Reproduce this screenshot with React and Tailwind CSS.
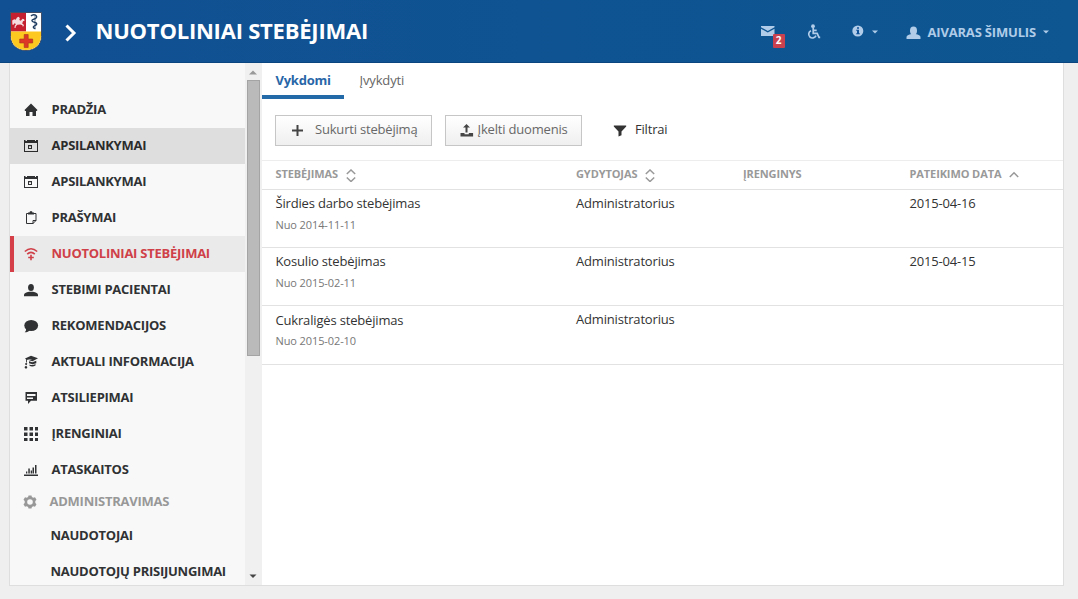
import React from "react";

const Svg = ({ w = 16, h = 16, className = "", children }) => (
  <svg width={w} height={h} viewBox={`0 0 ${w} ${h}`} fill="currentColor" className={`block shrink-0 ${className}`}>
    {children}
  </svg>
);

const CalendarIcon = () => (
  <Svg>
    <path d="M1 2h1.500v1h1.500V2h8v1h1V2h2v12H1zM2 5v8h12V5z" fillRule="evenodd" />
    <path d="M5 7h4v4H5zM6 8.200v1.700h2V8.200z" fillRule="evenodd" />
  </Svg>
);

const icons = {
  home: (
    <Svg>
      <path d="M8 1.500 14.500 8l-.8.900H13V14H9.500v-4h-3v4H3V8.900h-.9L1.500 8z" />
    </Svg>
  ),
  calendar: <CalendarIcon />,
  clipboard: (
    <Svg>
      <path d="M5.500 3.500h-2v10h6.500l3-3v-7h-2M10 14v-3.500h3" fill="none" stroke="currentColor" strokeWidth="1" />
      <path d="M5 2.500h1.500a1.500 1.500 0 0 1 3 0H11v2H5z" />
    </Svg>
  ),
  wifi: (
    <Svg>
      <g fill="none" stroke="currentColor" strokeWidth="1.600">
        <path d="M1.800 5.500Q8 0 14.200 5.500M4.200 8.200Q8 4.600 11.800 8.200" />
        <path d="M8 8.800v5.500M5.200 11.500h5.600" />
      </g>
    </Svg>
  ),
  user: (
    <Svg>
      <ellipse cx="8" cy="5.500" rx="2.900" ry="3.500" />
      <path d="M1 14.300v-1.800c0-1 2-2.200 5-2.700h4c3 .5 5 1.700 5 2.700v1.800z" />
    </Svg>
  ),
  comment: (
    <Svg>
      <ellipse cx="8.200" cy="7.500" rx="6.900" ry="5.600" />
      <path d="M3 10.500c.3 1.800-.3 2.800-1.300 3.800 2.500 0 4.300-.8 5-2.300z" />
    </Svg>
  ),
  cap: (
    <Svg>
      <path d="M2 4.500 8 1.800l7 2.400-5.500 3-3.500-1 3.500-1.200-5 .8-.5.300v2.500h-.9V5.500z" />
      <path d="M6 7.200 9.300 8.200l4-1.500v2.500L9.500 10.200 6 9.200zM6.500 10.500c2 .9 4.300.7 6-.4v1.300c-2 1.400-4.500 1.300-6 .3zM3.200 9a1 1 0 1 1-.1 0zM3 12a1.300 1.300 0 1 1-.1 0z" />
    </Svg>
  ),
  feedback: (
    <Svg>
      <path d="M2.500 2H14v8.700H8L5 14v-3.300H2.500zM4 4v2h8.500V4zM4 7.500V9h6V7.500z" fillRule="evenodd" />
    </Svg>
  ),
  grid: (
    <Svg>
      <path d="M1 1h3.500v3.500H1zM6.500 1H10v3.500H6.500zM12 1h3v3.500h-3zM1 6.500h3.500V10H1zM6.500 6.500H10V10H6.500zM12 6.500h3V10h-3zM1 12h3.500v3H1zM6.500 12H10v3H6.500zM12 12h3v3h-3z" />
    </Svg>
  ),
  chart: (
    <Svg>
      <path d="M1 12.500h14V14H1zM3 9.500h1.300v2H3zM5.300 6.500h1.500v5H5.300zM7.700 8.500H9v3H7.700zM9.500 5.500H11v6H9.500zM12 3h1.500v8.500H12z" />
    </Svg>
  ),
};

const menu = [
  ["home", "PRADŽIA"],
  ["calendar", "APSILANKYMAI", "hover"],
  ["calendar", "APSILANKYMAI"],
  ["clipboard", "PRAŠYMAI"],
  ["wifi", "NUOTOLINIAI STEBĖJIMAI", "active"],
  ["user", "STEBIMI PACIENTAI"],
  ["comment", "REKOMENDACIJOS"],
  ["cap", "AKTUALI INFORMACIJA"],
  ["feedback", "ATSILIEPIMAI"],
  ["grid", "ĮRENGINIAI"],
  ["chart", "ATASKAITOS"],
];

const itemStyles = {
  hover: "border-[#dedede] bg-[#dedede] text-[#2b2b2b]",
  active: "border-[#d43f48] bg-[#eaeaea] text-[#cf4048]",
  normal: "border-[#f8f8f8] text-[#303234]",
};

function Crest() {
  return (
    <svg width="34" height="41" viewBox="0 0 34 41" className="block shrink-0">
      <path d="M1.500 1.500h31v24c0 8-6.500 14-15.500 14s-15.500-6-15.500-14z" fill="#fff" stroke="#39455c" strokeWidth=".9" />
      <path d="M2 2h15v18.500H2z" fill="#c4202f" />
      <path d="M2 20.500h30V25c0 8.500-6.500 14-15 14S2 33.500 2 25z" fill="#fdc921" />
      <path d="M15.200 23.500h4v4.500h4.500v4h-4.500v4.500h-4V32h-4.500v-4h4.500z" fill="#dd3526" stroke="#a1351d" strokeWidth=".6" />
      <path d="m3.200 9.500 2-1.300 1.500.6L8 6.500l1.800-.8 1 1.500-.5 1.800 1.500.8 1.700-2 1.600.5.500 1.400-1.600.5-.8 2.300 1.800 1.500-.7 1.500-1-.2.3-1-2.300-.8-3 .2-1.500 1.500-.3 1.800-1-.1.200-2.200 1.300-1.600-1.500-.8-1.300 1.700-.8-.5z" fill="#fff" opacity=".85" />
      <path d="M26 3.500v15" stroke="#4f6580" strokeWidth=".8" />
      <path d="M22 5c2-2.500 6.500-1 5.500 1.400s-4.800 1.300-4.600 3.300 5 1.200 4.900 3.200-3.500 1.400-3.500 3.100 2 1.300 2 1.300" fill="none" stroke="#1e3b60" strokeWidth="1.400" />
    </svg>
  );
}

const Caret = () => (
  <Svg w={6} h={4}>
    <path d="M0 .5h6L3 3.500z" />
  </Svg>
);

function Header() {
  return (
    <header className="flex h-[63px] items-center border-b border-[#0b457f] bg-[#0f5292] bg-linear-to-r from-[#115093] to-[#0d5691] pl-[9px] text-[#b0cce8]">
      <Crest />
      <Svg w={14} h={18} className="ml-[22px] mt-[3px] text-white">
        <path d="m1.500 1.500 7.500 7.500-7.500 7.500" fill="none" stroke="currentColor" strokeWidth="3" />
      </Svg>
      <h1 className="ml-[16.500px] w-[640px] pb-[3px] text-[22px] leading-[30px] font-bold tracking-[-0.22px] text-white">NUOTOLINIAI STEBĖJIMAI</h1>
      <div className="flex items-center pt-[2px]">
        <div className="relative ml-[25px] -mt-[2px]">
          <Svg w={14} h={11}>
            <path d="M0 0h13.500v1.300L6.800 5 0 1.300zM0 2.700l6.800 3.800 6.700-3.800V10H0z" />
          </Svg>
          <span className="absolute top-[8px] left-[12px] flex h-[14px] w-[12px] items-center justify-center rounded-[1px] bg-[#c9414f] text-[10px] font-bold text-white">2</span>
        </div>
        <Svg w={14} h={16} className="ml-[32px] -mt-px">
          <circle cx="6" cy="2.200" r="1.900" />
          <g fill="none" stroke="currentColor" strokeWidth="1.700">
            <path d="M6.200 3.500v5.800h4l1.800 4h1.200M6.200 6.300h3.500" />
            <path d="M4 6.700a3.800 3.800 0 1 0 5 5" />
          </g>
        </Svg>
        <Svg w={12} h={12} className="ml-[31px] -mt-[2px]">
          <circle cx="5.800" cy="6" r="5.500" />
          <path d="M5 2.200h2v1.600H5zM4.200 4.800H7v3.500h.8v1H4.200v-1H5V5.800h-.8z" fill="#10529a" />
        </Svg>
        <div className="ml-[8px]"><Caret /></div>
        <Svg w={15} h={14} className="ml-[28px] mt-px">
          <ellipse cx="7.500" cy="4.700" rx="3.500" ry="4.200" />
          <path d="M.5 13v-2c0-1.300 2-2.400 5-2.900h4c3 .5 5 1.600 5 2.900v2z" />
        </Svg>
        <span className="ml-[7px] w-[110px] whitespace-nowrap pt-px text-[13px] font-bold tracking-[-0.18px]">AIVARAS ŠIMULIS</span>
        <div className="ml-[5px]"><Caret /></div>
      </div>
    </header>
  );
}

function Sidebar() {
  return (
    <nav className="h-full w-[235px] shrink-0 overflow-hidden bg-[#f8f8f8] pt-[29px] text-[13px] font-bold tracking-[-0.25px] whitespace-nowrap">
      {menu.map(([icon, label, state], i) => (
        <div key={i} className={`flex h-9 items-center border-l-4 pl-[8.500px] ${itemStyles[state || "normal"]}`}>
          {icons[icon]}
          <span className="ml-[13px]">{label}</span>
        </div>
      ))}
      <div className="flex h-[27px] items-center pl-[13px] text-[#989898]">
        <Svg w={14} h={14}>
          <path
            d="M5.500.5h3l.4 1.600 1.400.7 1.700-.5 1.500 2.400-1.200 1.300v2l1.200 1.300-1.500 2.400-1.700-.5-1.400.7-.4 1.600h-3l-.4-1.600-1.400-.7-1.700.5L.5 9.300 1.700 8V6L.5 4.700 2 2.300l1.700.5 1.400-.7zM7 4.200a2.800 2.800 0 1 0 0 5.600 2.800 2.800 0 0 0 0-5.600z"
            fillRule="evenodd"
          />
        </Svg>
        <span className="ml-[12.500px]">ADMINISTRAVIMAS</span>
      </div>
      <div className="flex h-[39px] items-center pt-[2px] pl-[40.500px] text-[#303234]">NAUDOTOJAI</div>
      <div className="flex h-[35px] items-center pl-[40.500px] text-[#303234]">NAUDOTOJŲ PRISIJUNGIMAI</div>
    </nav>
  );
}

function ScrollBar() {
  return (
    <div className="flex h-full w-[17px] shrink-0 flex-col items-center bg-[#f0f0f0] pr-px">
      <div className="flex h-[17px] items-center pt-px">
        <Svg w={8} h={5} className="text-[#999]"><path d="M0 4.500h8L4 .5z" /></Svg>
      </div>
      <div className="h-[276px] w-[13px] border border-[#a4a4a4] bg-[#bababa]" />
      <div className="mt-auto flex h-[18px] items-center">
        <Svg w={8} h={5} className="text-[#454545]"><path d="M.5 .5h7L4 4z" /></Svg>
      </div>
    </div>
  );
}

const SortIcon = ({ up }) => (
  <Svg w={10} h={13} className={up ? "-mt-px" : ""}>
    <path d={up ? "M.8 9 5 4.800 9.200 9" : "M.8 5 5 1l4.200 4M.8 8.500l4.200 4 4.200-4"} fill="none" stroke="currentColor" strokeWidth="1.500" />
  </Svg>
);

const rows = [
  ["Širdies darbo stebėjimas", "Nuo 2014-11-11", "2015-04-16", "h-[58px] pt-[2px]", "", "leading-[21px]"],
  ["Kosulio stebėjimas", "Nuo 2015-02-11", "2015-04-15", "h-[58px] pt-[2px]", "", "leading-[21px]"],
  ["Cukraligės stebėjimas", "Nuo 2015-02-10", "", "h-[59px] pt-[2px]", "pt-px", "leading-[19px]"],
];

function Main() {
  return (
    <main className="min-w-0 flex-1 bg-white">
      <div className="flex h-9 text-[13px] leading-[35px]">
        <div className="w-[82px] border-b-4 border-[#226ba8] pl-[13.500px] font-bold tracking-[-0.25px] text-[#2866a8]">Vykdomi</div>
        <div className="ml-[15.500px] tracking-[-0.15px] text-[#666]">Įvykdyti</div>
      </div>
      <div className="flex h-[61px] items-start pt-4 pl-[13px] text-[13px] tracking-[-0.19px]">
        <button className="flex h-[31px] w-[157px] items-center border border-[#c6c6c6] bg-linear-to-b from-white to-[#efefef] pl-[15px] text-[#686868]">
          <Svg w={13} h={13} className="text-[#444]"><path d="M5.500 1h2v4.500H12v2H7.500V12h-2V7.500H1v-2h4.500z" /></Svg>
          <span className="ml-[11px] pb-px whitespace-nowrap">Sukurti stebėjimą</span>
        </button>
        <button className="ml-[13px] flex h-[31px] w-[137px] items-center border border-[#c6c6c6] bg-linear-to-b from-white to-[#efefef] pl-[13.500px] text-[#686868]">
          <Svg w={14} h={13} className="text-[#454545]"><path d="M6.500 0 10 3.500H7.500v5h-2v-5H3zM.5 9h4v1.200h4.300V9h4.300v3.500H.5z" /></Svg>
          <span className="ml-[4px] pb-px whitespace-nowrap">Įkelti duomenis</span>
        </button>
        <div className="ml-[31px] flex h-[31px] items-center text-[#333]">
          <Svg w={14} h={13}><path d="M.8 1.500h12.400v1L8.500 7.500v3.800L5.500 12.500v-5L.8 2.500z" /></Svg>
          <span className="ml-[8px] pb-px">Filtrai</span>
        </div>
      </div>
      <div className="flex h-[30px] items-center border-y border-t-[#ededed] border-b-[#e2e2e2] pl-[13.500px] text-[11px] font-bold tracking-[-0.1px] text-[#999]">
        <div className="flex w-[300.500px] items-center gap-[8px]"><span className="pb-px">STEBĖJIMAS</span><SortIcon /></div>
        <div className="flex w-[167px] items-center gap-[8px]"><span className="pb-px">GYDYTOJAS</span><SortIcon /></div>
        <div className="w-[166.500px] pb-px">ĮRENGINYS</div>
        <div className="flex items-center gap-[8px]"><span className="pb-px">PATEIKIMO DATA</span><SortIcon up /></div>
      </div>
      {rows.map(([name, since, date, height, nameOffset, sinceLeading]) => (
        <div key={name} className={`flex border-b border-[#e2e2e2] pl-[13.500px] text-[13px] leading-[22px] tracking-[-0.17px] text-[#333] ${height}`}>
          <div className={`w-[300.500px] ${nameOffset}`}>
            <div>{name}</div>
            <div className={`text-[11px] tracking-[-0.1px] text-[#777] ${sinceLeading}`}>{since}</div>
          </div>
          <div className="w-[333.500px]">Administratorius</div>
          <div>{date}</div>
        </div>
      ))}
    </main>
  );
}

export default function App() {
  return (
    <div className="h-[599px] w-[1078px] overflow-hidden bg-[#efefef] font-['Open_Sans',sans-serif]">
      <Header />
      <div className="ml-[9px] flex h-[523px] w-[1055px] overflow-hidden border-x border-b border-[#dedede]">
        <Sidebar />
        <ScrollBar />
        <Main />
      </div>
    </div>
  );
}
